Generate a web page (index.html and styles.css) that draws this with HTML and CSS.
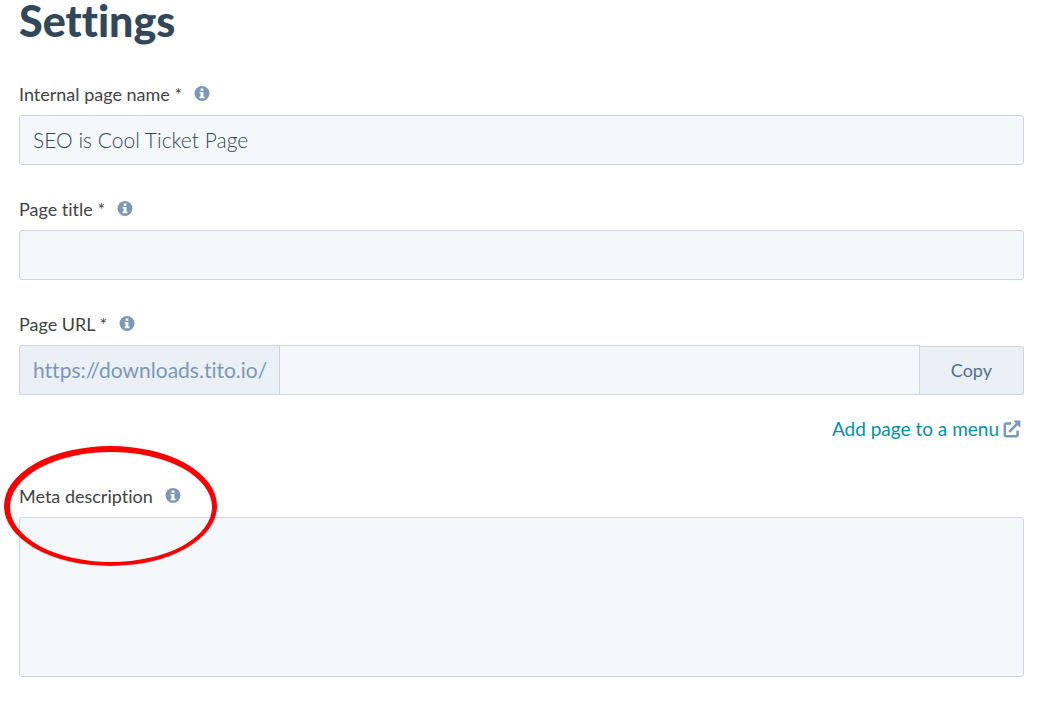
FILE: index.html
```html
<!DOCTYPE html>
<html lang="en">
<head>
  <meta charset="UTF-8">
  <meta name="viewport" content="width=device-width, initial-scale=1.0">
  <title>Settings</title>
  <link rel="stylesheet" href="styles.css">
</head>
<body>
  <svg class="defs" aria-hidden="true">
    <symbol id="info" viewBox="0 0 16 16">
      <circle cx="8" cy="7.5" r="7.5" fill="#7c98b6"/>
      <path d="M6.6 2.5h2.8v2.3H6.6zM5.6 6h3.8v4.4h1v1.8H5.6v-1.8h1V7.6h-1z" fill="#fff"/>
    </symbol>
  </svg>
  <form class="settings">
    <h1>Settings</h1>
    <div class="field">
      <div class="label">
        <label for="name">Internal page name *</label>
        <svg class="info"><use href="#info"/></svg>
      </div>
      <input class="control" type="text" id="name" value="SEO is Cool Ticket Page">
    </div>
    <div class="field">
      <div class="label">
        <label for="title">Page title *</label>
        <svg class="info"><use href="#info"/></svg>
      </div>
      <input class="control" type="text" id="title">
    </div>
    <div class="field url-field">
      <div class="label">
        <label for="url">Page URL *</label>
        <svg class="info"><use href="#info"/></svg>
      </div>
      <div class="url">
        <span class="prefix">https://downloads.tito.io/</span>
        <input class="control" type="text" id="url">
        <button class="copy" type="button">Copy</button>
      </div>
      <a class="menu-link" href="#">Add page to a menu
        <svg viewBox="0 0 18 18" fill="none" stroke="#7c98b6" stroke-width="2.5">
          <path d="M8 3.4H3.2q-1.4 0-1.4 1.4v10q0 1.4 1.4 1.4h10q1.4 0 1.4-1.4V10.4M6.2 11.8L15 3"/>
          <path d="M10.2.6h7.2v7.2z" fill="#7c98b6" stroke="none"/>
        </svg>
      </a>
    </div>
    <div class="field meta">
      <div class="label">
        <label for="meta">Meta description</label>
        <svg class="info"><use href="#info"/></svg>
      </div>
      <textarea class="control" id="meta"></textarea>
      <svg class="circle" viewBox="0 0 214 120" aria-hidden="true">
        <path fill="#fb0000" fill-rule="evenodd" d="M0 60a106.5 60 0 0 1 213 0a106.5 60 0 0 1-213 0zM6 61a101 55 0 0 0 202 0a101 55 0 0 0-202 0z"/>
      </svg>
    </div>
  </form>
</body>
</html>
```
FILE: styles.css
```css
* {
  box-sizing: border-box;
}
body {
  margin: 0;
  background-color: #fff;
  color: #33475b;
  font-family: Lato, "Liberation Sans", sans-serif;
  font-variant-ligatures: none;
}
.defs {
  display: none;
}
.settings {
  padding: 0 23px 24px 19px;
}
h1 {
  margin: 0 0 41px;
  font-size: 43px;
  line-height: 42px;
  font-weight: 900;
}
.field {
  margin-bottom: 33px;
}
.label {
  display: flex;
  align-items: center;
  gap: 12px;
  height: 22px;
  margin-bottom: 10px;
  color: #434343;
  font-size: 18px;
}
.info {
  width: 16px;
  height: 16px;
}
.control {
  display: block;
  width: 100%;
  height: 50px;
  padding: 0 13px 2px;
  border: 1px solid #cbd6e2;
  border-radius: 3px;
  background-color: #f5f8fa;
  color: #33475b;
  font-family: inherit;
  font-size: 21px;
  font-weight: 300;
  outline: none;
}
.url {
  display: flex;
}
.prefix {
  padding: 0 12px 0 13px;
  border: 1px solid #cbd6e2;
  border-right: 0;
  border-radius: 3px 0 0 3px;
  background-color: #eaf0f6;
  color: #7c98b6;
  font-size: 21px;
  line-height: 48px;
}
.url .control {
  flex: 1;
  width: auto;
  min-width: 0;
  border-radius: 0;
}
.copy {
  margin-top: 1px;
  padding: 0 31px 2px;
  border: 1px solid #cbd6e2;
  border-left: 0;
  border-radius: 0 3px 3px 0;
  background-color: #eaf0f6;
  color: #506e91;
  font-family: inherit;
  font-size: 18px;
}
.menu-link {
  display: flex;
  align-items: center;
  justify-content: flex-end;
  gap: 4px;
  margin: 22px 3px 0 0;
  color: #0091ae;
  font-size: 19px;
  line-height: 24px;
  text-decoration: none;
}
.menu-link svg {
  width: 18px;
  height: 18px;
}
.url-field {
  margin-bottom: 44px;
}
.meta {
  position: relative;
  margin-bottom: 0;
}
.meta .control {
  height: 160px;
  padding: 13px;
  resize: none;
}
/* red highlight around the meta description label */
.circle {
  position: absolute;
  top: -39px;
  left: -15px;
  width: 214px;
  height: 120px;
  pointer-events: none;
}
```
